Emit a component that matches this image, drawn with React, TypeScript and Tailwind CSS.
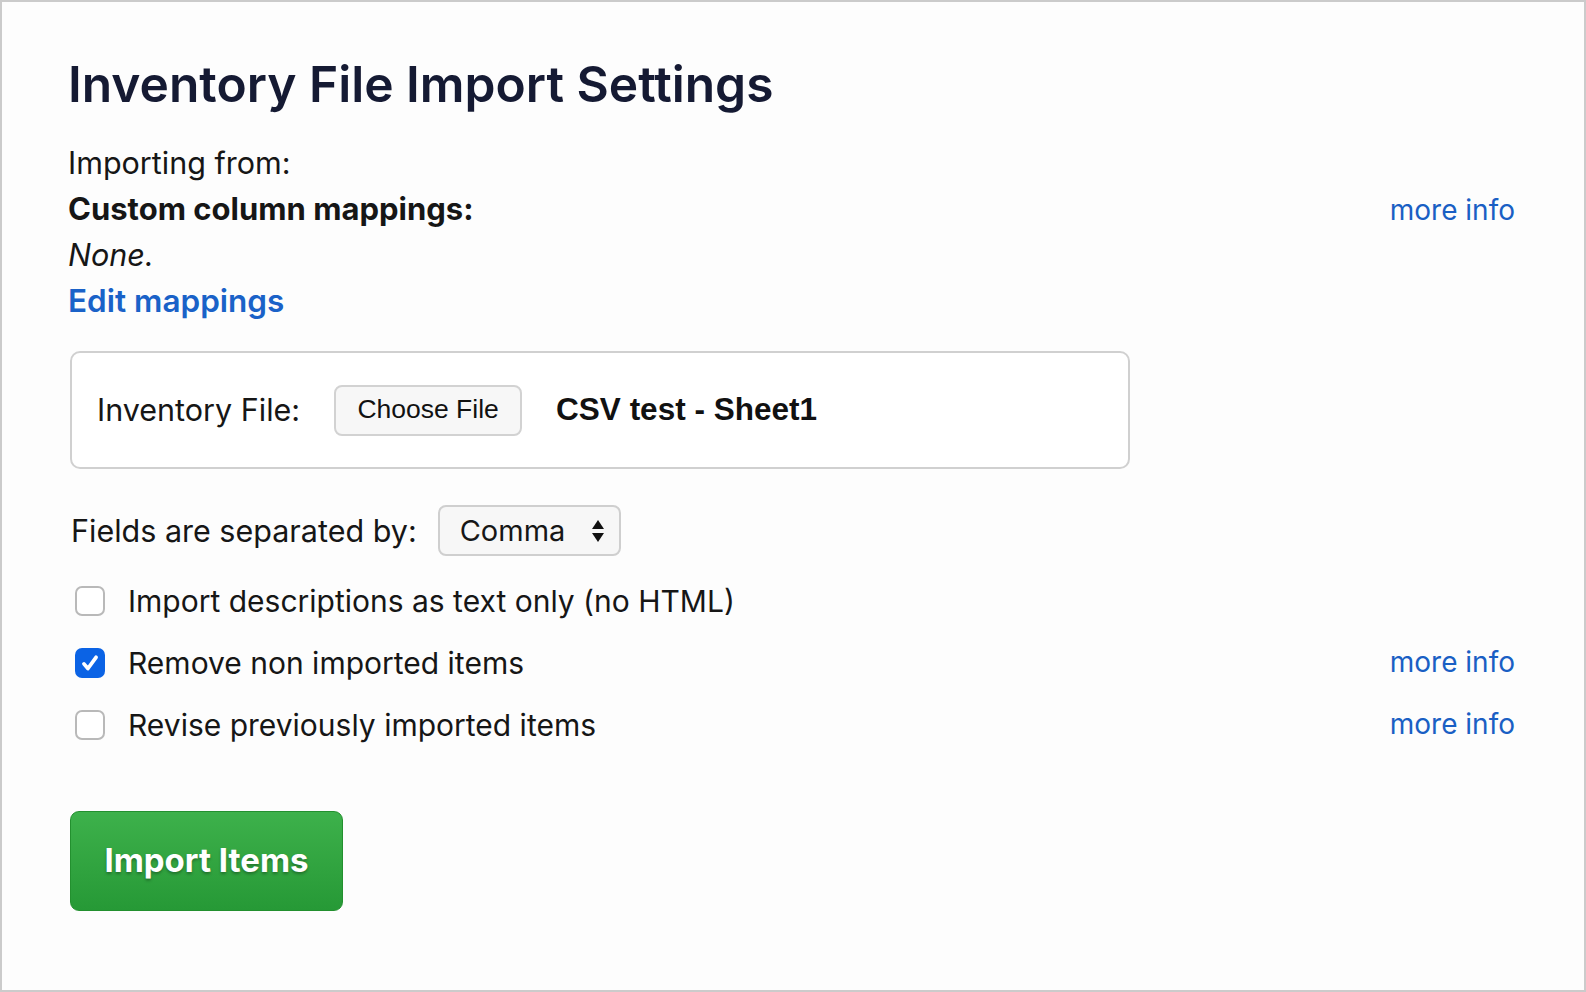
import React from 'react';

function CheckBox({ checked }: { checked?: boolean }) {
  if (checked) {
    return (
      <span className="block w-[30px] h-[30px] rounded-[7px] bg-[#0b63e5] flex items-center justify-center shrink-0">
        <svg className="w-[22px] h-[22px]" viewBox="0 0 20 20" fill="none">
          <path d="M4.5 10.8l3.6 4.2L15.5 4.8" stroke="white" strokeWidth="3.4" strokeLinecap="round" strokeLinejoin="round" />
        </svg>
      </span>
    );
  }
  return <span className="block w-[30px] h-[30px] rounded-[7px] border-2 border-[#b9b9b9] bg-white shrink-0" />;
}

function MoreInfo() {
  return <a className="text-[#1a5fc4] text-[28px] leading-none">more info</a>;
}

function OptionRow({ label, checked, info }: { label: string; checked?: boolean; info?: boolean }) {
  return (
    <div className="h-[62px] flex items-center">
      <div className="ml-[7px] mr-[23px]">
        <CheckBox checked={checked} />
      </div>
      <span className="text-[30px]">{label}</span>
      {info && <div className="ml-auto"><MoreInfo /></div>}
    </div>
  );
}

export default function App() {
  return (
    <div className="w-[1586px] h-[992px] border-2 border-[#cbcbcb] bg-[#fdfdfd] text-[#161616] font-['Inter',sans-serif] overflow-hidden">
      <div className="pl-[66px] pr-[69px] pt-[52px]">
        <h1 className="text-[49.7px] leading-[60px] font-semibold text-[#151a33]">
          Inventory File Import Settings
        </h1>

        {/* Import source + mappings */}
        <div className="mt-[26px] text-[30.5px] leading-[46px]">
          <div>Importing from:</div>
          <div className="flex items-center">
            <span className="font-bold text-[31px]">Custom column mappings:</span>
            <div className="ml-auto"><MoreInfo /></div>
          </div>
          <div className="italic">None.</div>
          <a className="block text-[#1a62c8] font-semibold text-[31.5px]">Edit mappings</a>
        </div>

        {/* File picker */}
        <div className="mt-[27px] ml-[2px] w-[1060px] h-[118px] border-2 border-[#d0d0d0] rounded-[10px] flex items-center pl-[25px] bg-white">
          <span className="text-[30.5px]">Inventory File:</span>
          <button className="ml-[34px] w-[188px] h-[51px] rounded-[8px] border-2 border-[#d2d2d2] bg-[#f7f7f7] text-[26.5px] font-['Liberation_Sans',sans-serif] text-[#111]">
            Choose File
          </button>
          <span className="ml-[34px] text-[31.5px] font-bold font-['Liberation_Sans',sans-serif] text-[#111]">CSV test - Sheet1</span>
        </div>

        {/* Separator */}
        <div className="mt-[36px] flex items-center ml-[3px]">
          <span className="text-[30.5px]">Fields are separated by:</span>
          <div className="ml-[21px] w-[183px] h-[51px] rounded-[8px] border-2 border-[#cfcfcf] bg-[#f7f7f7] flex items-center pl-[20px] pr-[14px]">
            <span className="text-[29px]">Comma</span>
            <svg className="ml-auto w-[14px] h-[28px]" viewBox="0 0 14 28">
              <path d="M7 3L13 12H1z" fill="#111" />
              <path d="M7 25L13 16H1z" fill="#111" />
            </svg>
          </div>
        </div>

        {/* Options */}
        <div className="mt-[14px]">
          <OptionRow label="Import descriptions as text only (no HTML)" />
          <OptionRow label="Remove non imported items" checked info />
          <OptionRow label="Revise previously imported items" info />
        </div>

        <button className="mt-[55px] ml-[2px] w-[273px] h-[100px] rounded-[9px] bg-gradient-to-b from-[#3db14b] to-[#269936] border border-[#23902f] text-white text-[33px] font-bold [text-shadow:0_2px_3px_rgba(0,0,0,0.3)]">
          Import Items
        </button>
      </div>
    </div>
  );
}
